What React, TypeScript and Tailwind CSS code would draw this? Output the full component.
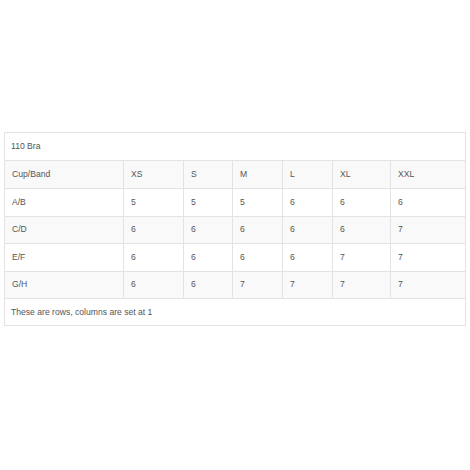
const header = ["Cup/Band", "XS", "S", "M", "L", "XL", "XXL"];
const rows = [
  ["A/B", "5", "5", "5", "6", "6", "6"],
  ["C/D", "6", "6", "6", "6", "6", "7"],
  ["E/F", "6", "6", "6", "6", "7", "7"],
  ["G/H", "6", "6", "7", "7", "7", "7"],
];
const widths = ["w-[119px]", "w-[60px]", "w-[49px]", "w-[50px]", "w-[50px]", "w-[58px]", "w-[75px]"];

export default function App() {
  return (
    <div className="w-[470px] h-[470px] bg-white pt-[132px] pl-[4px] font-['Liberation_Sans',Arial,sans-serif] text-[8.6px] text-[#555]">
      <table className="w-[461px] border-collapse table-fixed">
        <colgroup>
          {widths.map((w, i) => (
            <col key={i} className={w} />
          ))}
        </colgroup>
        <tbody>
          <tr className="h-[28px]">
            <td colSpan={7} className="border border-[#e3e3e3] px-[6px] align-middle">
              110 Bra
            </td>
          </tr>
          <tr className="h-[28px] bg-[#f9f9f9]">
            {header.map((h, i) => (
              <td key={i} className="border border-[#e3e3e3] px-[7px] align-middle">
                {h}
              </td>
            ))}
          </tr>
          {rows.map((r, ri) => (
            <tr key={ri} className={ri % 2 === 1 ? "h-[27.5px] bg-[#f9f9f9]" : "h-[27.5px] bg-white"}>
              {r.map((c, ci) => (
                <td key={ci} className="border border-[#e3e3e3] px-[7px] align-middle">
                  {c}
                </td>
              ))}
            </tr>
          ))}
          <tr className="h-[27px]">
            <td colSpan={7} className="border border-[#e3e3e3] px-[6px] align-middle">
              These are rows, columns are set at 1
            </td>
          </tr>
        </tbody>
      </table>
    </div>
  );
}
